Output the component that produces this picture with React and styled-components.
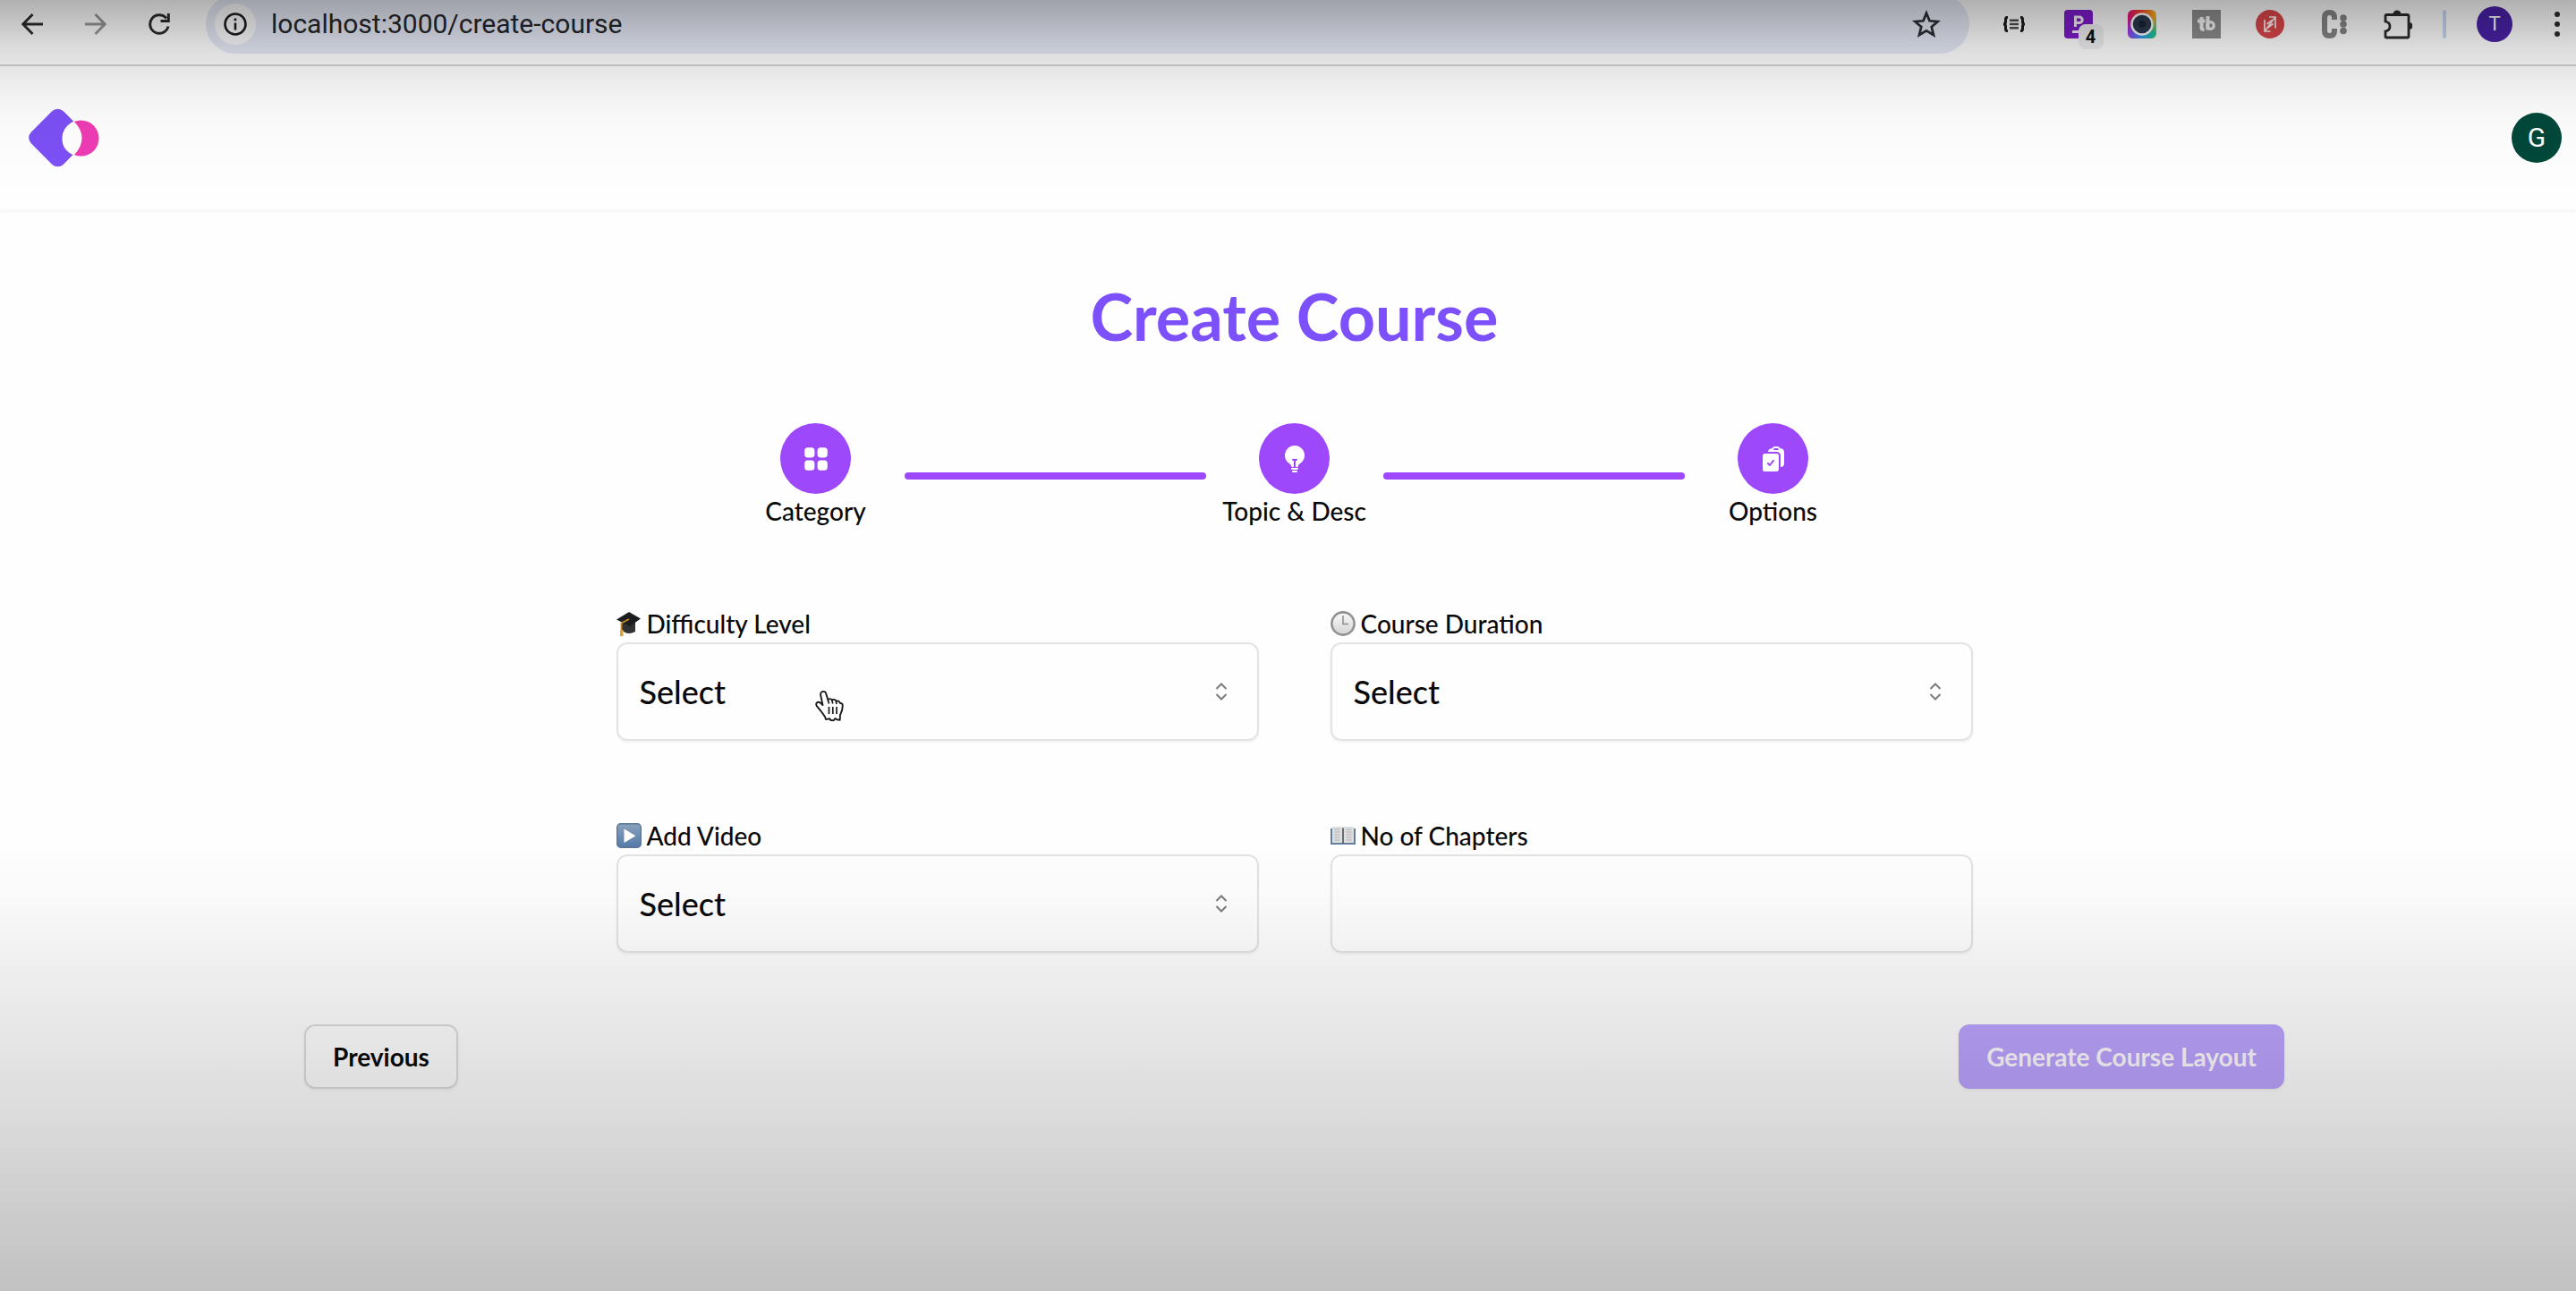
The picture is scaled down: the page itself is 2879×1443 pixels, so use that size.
import React from "react";
import styled, { createGlobalStyle } from "styled-components";
import { HiMiniSquares2X2, HiLightBulb, HiClipboardDocumentCheck } from "react-icons/hi2";

const GlobalStyle = createGlobalStyle`
  *, *::before, *::after { box-sizing: border-box; }
  body {
    margin: 0;
    background: #fefefe;
    color: #0a0a0a;
    font-family: Lato, "Open Sans", sans-serif;
    overflow: hidden;
  }
  button, input, select { font: inherit; color: inherit; }
`;

const Page = styled.div`
  position: relative;
  min-height: 100vh;
  display: flex;
  flex-direction: column;
`;

/* Soft darkening at the top and bottom edges of the window. */
const Shade = styled.div`
  position: absolute;
  inset: 0;
  pointer-events: none;
  background:
    linear-gradient(to bottom, rgba(0,0,0,.31) 0, rgba(0,0,0,.22) 27px, rgba(0,0,0,.14) 52px,
      rgba(0,0,0,.1) 72px, rgba(0,0,0,.05) 105px, rgba(0,0,0,.022) 130px, rgba(0,0,0,.006) 170px, transparent 220px) top / 100% 220px no-repeat,
    linear-gradient(to top, rgba(0,0,0,.24) 0, rgba(0,0,0,.19) 103px, rgba(0,0,0,.15) 173px,
      rgba(0,0,0,.12) 227px, rgba(0,0,0,.08) 323px, rgba(0,0,0,.05) 379px, rgba(0,0,0,.015) 443px, transparent 503px) bottom / 100% 503px no-repeat;
`;

const Toolbar = styled.div`
  display: flex;
  align-items: center;
  gap: 34px;
  height: 74px;
  padding: 0 5px 18px 22px;
  border-bottom: 2px solid #d2d2d2;
  background: #ffffff;
`;

const NavButtons = styled.div`
  display: flex;
  gap: 43px;
  margin-right: 4px;
`;

const ToolButton = styled.button`
  position: relative;
  display: flex;
  align-items: center;
  justify-content: center;
  flex: none;
  width: ${(p) => p.$size || 32}px;
  height: ${(p) => p.$size || 32}px;
  padding: 0;
  border: 0;
  background: none;
  svg { display: block; flex: none; }
`;

const AddressBar = styled.div`
  display: flex;
  align-items: center;
  flex: 1;
  gap: 17px;
  height: 66px;
  margin: -6px 0;
  padding: 0 33px 0 10px;
  border-radius: 33px;
  background: #e6eaf6;
`;

const InfoChip = styled(ToolButton)`
  border-radius: 50%;
  background: #fbfbfd;
`;

const AddressInput = styled.input`
  flex: 1;
  min-width: 0;
  padding: 0;
  border: 0;
  outline: 0;
  background: none;
  color: #25262b;
  font-family: Roboto, sans-serif;
  font-size: 30px;
  line-height: 36px;
`;

const Extensions = styled.div`
  display: flex;
  justify-content: space-between;
  width: 461px;
`;

const CountBadge = styled.span`
  position: absolute;
  left: 16px;
  top: 16px;
  width: 28px;
  height: 28px;
  border-radius: 8px;
  background: #f0f0f2;
  color: #111111;
  font-family: Roboto, sans-serif;
  font-size: 20px;
  font-weight: 700;
  line-height: 28px;
  text-align: center;
`;

const Divider = styled.span`
  width: 4px;
  height: 32px;
  border-radius: 2px;
  background: #cbd9f5;
`;

const Avatar = styled.button`
  flex: none;
  width: ${(p) => p.$size}px;
  height: ${(p) => p.$size}px;
  padding: 0;
  border: 0;
  border-radius: 50%;
  background: ${(p) => p.$color};
  color: #ffffff;
  font-family: Roboto, sans-serif;
  font-size: ${(p) => p.$text}px;
  line-height: ${(p) => p.$size}px;
  text-align: center;
`;

const Header = styled.header`
  display: flex;
  align-items: center;
  justify-content: space-between;
  padding: 47px 16px 47px 30px;
  border-bottom: 1px solid #f8f8f8;
  box-shadow: 0 2px 3px rgba(0, 0, 0, 0.04);
`;

const HomeLink = styled.a`
  display: block;
  svg { display: block; }
`;

const Main = styled.main`
  display: flex;
  flex-direction: column;
  align-items: center;
  padding: 78px 326px 0 340px;
`;

const Title = styled.h1`
  margin: 0;
  color: #7c50fb;
  font-size: 72px;
  font-weight: 700;
  line-height: 80px;
`;

const Stepper = styled.ol`
  display: flex;
  align-items: center;
  margin: 80px 0 0;
  padding: 0;
  list-style: none;
`;

const Step = styled.li`
  display: flex;
  flex-direction: column;
  align-items: center;
  width: 198px;
`;

const StepIcon = styled.span`
  display: flex;
  align-items: center;
  justify-content: center;
  width: 79px;
  height: 79px;
  border-radius: 50%;
  background: #9e48fb;
  color: #ffffff;
  font-size: 32px;
`;

const StepLabel = styled.span`
  font-size: 28px;
  font-weight: 500;
  line-height: 39px;
  white-space: nowrap;
`;

const StepLine = styled.li`
  width: 337px;
  height: 8px;
  border-radius: 4px;
  background: #9e48fb;
`;

const Fields = styled.div`
  display: grid;
  grid-template-columns: 1fr 1fr;
  gap: 88px 80px;
  width: 100%;
  max-width: 1516px;
  margin-top: 88px;
`;

const Field = styled.div`
  display: flex;
  flex-direction: column;
  gap: 3px;
`;

const FieldLabel = styled.label`
  display: flex;
  align-items: center;
  gap: 6px;
  font-size: 28px;
  font-weight: 500;
  line-height: 36px;
  svg { display: block; }
`;

const Control = styled.div`
  position: relative;
  color: #7b7b7b;
`;

const boxStyle = `
  display: block;
  width: 100%;
  height: 110px;
  padding: 0 24px;
  border: 2px solid #e3e3e6;
  border-radius: 12px;
  outline: 0;
  background: transparent;
  color: #0a0a0a;
  font-size: 36px;
  font-weight: 500;
  box-shadow: 0 2px 3px rgba(0, 0, 0, 0.05);
`;

const SelectBox = styled.select`
  ${boxStyle}
  appearance: none;
`;

const TextBox = styled.input`
  ${boxStyle}
`;

const ChevronSlot = styled.span`
  position: absolute;
  right: 35px;
  top: 0;
  bottom: 0;
  display: flex;
  align-items: center;
  pointer-events: none;
`;

const PointerSlot = styled.span`
  position: absolute;
  left: 222px;
  top: 53px;
  pointer-events: none;
  svg { display: block; }
`;

const Actions = styled.div`
  display: flex;
  justify-content: space-between;
  width: 100%;
  margin-top: 80px;
`;

const ActionButton = styled.button`
  height: 72px;
  min-width: ${(p) => (p.$primary ? 364 : 172)}px;
  padding: 0 28px;
  border: 2px solid ${(p) => (p.$primary ? "#bba3fe" : "#dcdcde")};
  border-radius: 12px;
  background: ${(p) => (p.$primary ? "#bba3fe" : "transparent")};
  color: ${(p) => (p.$primary ? "#fdf9ff" : "#0a0a0a")};
  font-size: 28px;
  font-weight: 700;
  line-height: 40px;
  white-space: nowrap;
  box-shadow: 0 2px 4px rgba(0, 0, 0, 0.05);
`;

const stroke = (width) => ({
  fill: "none",
  stroke: "currentColor",
  strokeWidth: width,
});

const BackIcon = () => (
  <svg width="24" height="24" viewBox="0 0 24 24" {...stroke(2.8)} color="#2c2c2e"><path d="M24 12H2M12.500 1L1.800 12l10.700 11" /></svg>
);
const ForwardIcon = () => (
  <svg width="24" height="24" viewBox="0 0 24 24" {...stroke(2.8)} color="#98989a"><path d="M0 12h22M11.500 1l10.700 11-10.700 11" /></svg>
);
const ReloadIcon = () => (
  <svg width="24" height="26" viewBox="0 0 24 26" {...stroke(3)} color="#2c2c2e"><path d="M22 15.500A10.300 10.300 0 1 1 20 6.500" /><path d="M22.300 1v8.600h-8.800" /></svg>
);
const InfoIcon = () => (
  <svg width="26" height="26" viewBox="0 0 26 26" {...stroke(2.6)} color="#1d1d1f"><circle cx="13" cy="13" r="11.500" /><path d="M13 11.500v8M13 6.500v2.800" /></svg>
);
const StarIcon = () => (
  <svg width="32" height="32" viewBox="0 0 30 30" {...stroke(2.6)} color="#2e3036" strokeLinejoin="miter"><path d="M15 3.500l3.300 8 8.700.7-6.600 5.600 2.100 8.500L15 21.800l-7.500 4.500 2.100-8.500L3 12.200l8.700-.7z" /></svg>
);
const BracesIcon = () => (
  <svg width="26" height="18" viewBox="0 0 26 18" {...stroke(3)} color="#1c1c1c">
    <path d="M6 1.500H5Q3.500 1.500 3.500 4v2.500Q3.500 9 1 9q2.500 0 2.500 2.500V14q0 2.500 1.500 2.500h1M20 1.500h1q1.500 0 1.500 2.500v2.500Q22.500 9 25 9q-2.500 0-2.500 2.500V14q0 2.500-1.500 2.500h-1" />
    <path d="M8 4.800h10M8 9h10M8 13.200h10" strokeWidth="2.600" stroke="#4c4c4c" />
  </svg>
);
const PurpleIcon = () => (
  <svg width="32" height="32" viewBox="0 0 32 32"><rect width="32" height="32" rx="4" fill="#7d1bcb" /><path d="M12.500 19V8h4.500a3 3 0 0 1 0 6.500h-4.500M9 24.500h8" fill="none" stroke="#f6edfc" strokeWidth="3" /></svg>
);
const CameraIcon = () => (
  <svg width="32" height="32" viewBox="0 0 32 32">
    <defs>
      <linearGradient id="camTop"><stop offset="0" stopColor="#e0117d" /><stop offset=".45" stopColor="#fa3d24" /><stop offset="1" stopColor="#f6bb22" /></linearGradient>
      <linearGradient id="camBottom"><stop offset="0" stopColor="#9a3cf4" /><stop offset=".5" stopColor="#2f9af0" /><stop offset="1" stopColor="#1fd083" /></linearGradient>
      <linearGradient id="camFade" x2="0" y2="1"><stop offset=".25" stopColor="#000" /><stop offset=".8" stopColor="#fff" /></linearGradient>
      <mask id="camMask"><rect width="32" height="32" fill="url(#camFade)" /></mask>
    </defs>
    <rect width="32" height="32" rx="6" fill="url(#camTop)" />
    <rect width="32" height="32" rx="6" fill="url(#camBottom)" mask="url(#camMask)" />
    <circle cx="16" cy="16" r="11.500" fill="#2b3a4d" stroke="#ffffff" strokeWidth="2.400" />
    <circle cx="16" cy="16" r="4" fill="#182433" />
  </svg>
);
const BuddyIcon = () => (
  <svg width="32" height="32" viewBox="0 0 32 32"><rect width="32" height="32" fill="#8d8d8d" /><path d="M10.500 8v12q0 2 3 2M6 12.500h8.500M17.500 7v15.500" fill="none" stroke="#f7f7f7" strokeWidth="4" /><circle cx="20.500" cy="17.500" r="3.800" fill="none" stroke="#f7f7f7" strokeWidth="3.200" /></svg>
);
const RedIcon = () => (
  <svg width="32" height="32" viewBox="0 0 32 32"><circle cx="16" cy="16" r="16" fill="#dc474b" /><path d="M10 11v13h6.500M22 20.500V8h-7M10.500 23.500L21.500 8.500M12.500 16l6-4.500M13.500 20l6-4.500" fill="none" stroke="#fff2f0" strokeWidth="1.700" /></svg>
);
const ColonIcon = () => (
  <svg width="30" height="32" viewBox="0 0 30 32"><path d="M15 11V8.500Q15 3 9.500 3T4 8.500v15Q4 29 9.500 29t5.500-5.500V21" fill="none" stroke="#868686" strokeWidth="6" /><g fill="#868686"><circle cx="25" cy="9" r="3.800" /><circle cx="25" cy="16" r="3.800" /><circle cx="25" cy="23.500" r="3.800" /></g></svg>
);
const PuzzleIcon = () => (
  <svg width="32" height="33" viewBox="0 0 32 33" color="#2a2a2c"><path d="M2 7q0-1.500 1.500-1.500h23Q28 5.500 28 7v22.500q0 1.500-1.500 1.500h-23Q2 31 2 29.500V24q5-1 5-5.500T2 13z" {...stroke(2.800)} /><path d="M10.500 5a4.500 4.500 0 0 1 9 0zM28.500 14a4 4 0 0 1 0 8z" fill="currentColor" /></svg>
);
const DotsIcon = () => (
  <svg width="6" height="30" viewBox="0 0 6 30" fill="#2d2d2f"><circle cx="3" cy="4" r="3" /><circle cx="3" cy="15" r="3" /><circle cx="3" cy="26" r="3" /></svg>
);

const Logo = () => (
  <svg width="82" height="66" viewBox="0 0 82 66">
    <rect x="9" y="7.500" width="51" height="51" rx="9" transform="rotate(45 34.500 33)" fill="#7c50f5" />
    <circle cx="60.500" cy="33.500" r="20" fill="#ee3cb4" />
    <path d="M52.500 14.500Q39.500 21 39.500 34T52.500 52.500Q61.500 43.500 61.500 33.500T52.500 14.500z" fill="#ffffff" />
  </svg>
);

const CapEmoji = () => (
  <svg width="28" height="28" viewBox="0 0 28 28"><path d="M6 11v10q6 7 15 2V12z" fill="#303233" /><path d="M14 1L27 8.500 15 17 0 9.500z" fill="#1b1d1f" /><path d="M14 9L5.500 13.500V22" fill="none" stroke="#c98a2c" strokeWidth="1.800" /><path d="M4 21h3.500v7H4z" fill="#dda23c" /></svg>
);
const ClockEmoji = () => (
  <svg width="28" height="28" viewBox="0 0 28 28">
    <defs><linearGradient id="clockFill" x2="0" y2="1"><stop offset="0" stopColor="#fafafa" /><stop offset="1" stopColor="#d4d4d4" /></linearGradient></defs>
    <circle cx="14" cy="14" r="12.600" fill="url(#clockFill)" stroke="#929292" strokeWidth="2.600" /><path d="M14 5v9.500h6" fill="none" stroke="#8c8c8c" strokeWidth="1.500" />
  </svg>
);
const PlayEmoji = () => (
  <svg width="28" height="28" viewBox="0 0 28 28">
    <defs><linearGradient id="playFill" x2="0" y2="1"><stop offset="0" stopColor="#8aa2bb" /><stop offset="1" stopColor="#5379a8" /></linearGradient></defs>
    <rect x=".7" y=".7" width="26.600" height="26.600" rx="4" fill="url(#playFill)" stroke="#5b7594" strokeWidth="1.400" /><path d="M8.500 6.500v15.500L21.500 14.300z" fill="#ffffff" />
  </svg>
);
const BookEmoji = () => (
  <svg width="28" height="28" viewBox="0 0 28 28"><path d="M0 6h28v18H0z" fill="#62809b" /><path d="M2 4h10.500q1.500 0 1.500 1.500Q14 4 15.500 4H26v18H15.500q-1.500 0-1.500 1-0-1-1.500-1H2z" fill="#dededf" /><path d="M14 5.500V23" stroke="#5f5f64" strokeWidth="1.800" /><path d="M4.500 7h6M4.500 10h6M4.500 13h6M4.500 16h6M4.500 19h6M17.500 7h6M17.500 10h6M17.500 13h6M17.500 16h6M17.500 19h6" stroke="#b0b0b5" /></svg>
);

const Chevrons = () => (
  <svg width="14" height="20" viewBox="0 0 14 20" {...stroke(2)}><path d="M1.500 7L7 1.500 12.500 7M1.500 13L7 18.500 12.500 13" /></svg>
);

const HandPointer = () => (
  <svg width="32" height="36" viewBox="0 0 32 36">
    <path d="M8 2.200c2-.9 3.600.2 4.200 2l2.200 7.200c.8-1.900 3.800-1.700 4.500.4 1-1.500 3.900-1.200 4.500 1 1.500-1 3.800 0 4.600 2.200 1.500-.3 2.800.8 2.800 2.800 0 5-1.200 7-2.800 10.200l-.3 5.800-3.500-.5-1.800-1.300-1.700 2.300-3.200-.2-1.200-1.800-4.300.8c-.4-3.700-3.500-6-5.300-9L2 18.400c-1.500-2.300-.6-4.300 1.300-4.600 2-.3 3.700 1.500 5.200 3.300L6.200 6C5.800 4.300 6.500 2.900 8 2.200z" fill="#ffffff" stroke="#1c1c1e" strokeWidth="1.900" strokeLinejoin="round" />
    <path d="M15.500 19v8M19.800 19v8M24 19v8M14.400 11.500l1.100 4M18.900 12l.8 3.500M23.400 13l.6 3" fill="none" stroke="#1c1c1e" strokeWidth="1.700" />
  </svg>
);

const extensions = [
  { name: "JSON viewer", icon: <BracesIcon /> },
  { name: "Page tools", icon: <PurpleIcon />, badge: "4" },
  { name: "Screen recorder", icon: <CameraIcon /> },
  { name: "Video buddy", icon: <BuddyIcon /> },
  { name: "Resizer", icon: <RedIcon /> },
  { name: "Columns", icon: <ColonIcon /> },
  { name: "Extensions", icon: <PuzzleIcon /> },
];

const steps = [
  { label: "Category", icon: <HiMiniSquares2X2 /> },
  { label: "Topic & Desc", icon: <HiLightBulb /> },
  { label: "Options", icon: <HiClipboardDocumentCheck /> },
];

function SelectField({ id, icon, label, children }) {
  return (
    <Field>
      <FieldLabel htmlFor={id}>{icon}{label}</FieldLabel>
      <Control>
        <SelectBox id={id} defaultValue="">
          <option value="">Select</option>
        </SelectBox>
        <ChevronSlot><Chevrons /></ChevronSlot>
        {children}
      </Control>
    </Field>
  );
}

export default function App() {
  return (
    <Page>
      <GlobalStyle />
      <Toolbar>
        <NavButtons>
          <ToolButton $size={28} aria-label="Back"><BackIcon /></ToolButton>
          <ToolButton $size={28} aria-label="Forward"><ForwardIcon /></ToolButton>
          <ToolButton $size={28} aria-label="Reload"><ReloadIcon /></ToolButton>
        </NavButtons>
        <AddressBar>
          <InfoChip $size={46} aria-label="Site information"><InfoIcon /></InfoChip>
          <AddressInput aria-label="Address" defaultValue="localhost:3000/create-course" />
          <ToolButton $size={30} aria-label="Bookmark"><StarIcon /></ToolButton>
        </AddressBar>
        <Extensions>
          {extensions.map((e) => (
            <ToolButton key={e.name} aria-label={e.name}>
              {e.icon}
              {e.badge && <CountBadge>{e.badge}</CountBadge>}
            </ToolButton>
          ))}
        </Extensions>
        <Divider />
        <Avatar $size={40} $text={22} $color="#4a22a8">T</Avatar>
        <ToolButton aria-label="Menu"><DotsIcon /></ToolButton>
      </Toolbar>

      <Header>
        <HomeLink href="#" aria-label="Home"><Logo /></HomeLink>
        <Avatar $size={56} $text={30} $color="#00483a">G</Avatar>
      </Header>

      <Main>
        <Title>Create Course</Title>
        <Stepper>
          {steps.map((s, i) => (
            <React.Fragment key={s.label}>
              {i > 0 && <StepLine aria-hidden="true" />}
              <Step>
                <StepIcon>{s.icon}</StepIcon>
                <StepLabel>{s.label}</StepLabel>
              </Step>
            </React.Fragment>
          ))}
        </Stepper>

        <Fields>
          <SelectField id="level" icon={<CapEmoji />} label="Difficulty Level">
            <PointerSlot><HandPointer /></PointerSlot>
          </SelectField>
          <SelectField id="duration" icon={<ClockEmoji />} label="Course Duration" />
          <SelectField id="video" icon={<PlayEmoji />} label="Add Video" />
          <Field>
            <FieldLabel htmlFor="chapters"><BookEmoji />No of Chapters</FieldLabel>
            <TextBox id="chapters" type="text" inputMode="numeric" />
          </Field>
        </Fields>

        <Actions>
          <ActionButton>Previous</ActionButton>
          <ActionButton $primary disabled>Generate Course Layout</ActionButton>
        </Actions>
      </Main>
      <Shade />
    </Page>
  );
}
